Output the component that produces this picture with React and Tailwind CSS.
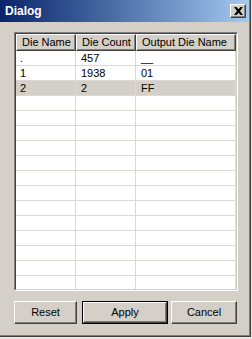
const rows = [
  ['.', '457', '__'],
  ['1', '1938', '01'],
  ['2', '2', 'FF', true],
]

const emptyRows = Array.from({ length: 14 })

function Raised({ className = '', children }) {
  return (
    <div
      className={`flex items-center border-t border-l border-t-white border-l-white border-r border-b border-r-[#404040] border-b-[#404040] shadow-[inset_-1px_-1px_0_#808080] bg-[#d4d0c8] ${className}`}
    >
      {children}
    </div>
  )
}

export default function App() {
  return (
    <div
      className="w-[252px] h-[339px] bg-[#ece9e2] overflow-hidden text-[11px] text-black"
      style={{ fontFamily: '"Liberation Sans", Arial, sans-serif' }}
    >
      <div className="w-[251px] h-[337px] border-r border-b border-[#404040] bg-[#d4d0c8]">
        <div className="w-[250px] h-[336px] border-r border-b border-[#808080] flex flex-col">
          {/* title bar */}
          <div className="h-[22px] w-[249px] flex items-center justify-between bg-gradient-to-r from-[#0a246a] to-[#a6caf0] pl-[5px] pr-[3px]">
            <span className="text-white font-bold text-[12px]">Dialog</span>
            <Raised className="w-[16px] h-[14px] justify-center">
              <svg width="9" height="8" viewBox="0 0 9 8">
                <path d="M0 0h2.5l2 2.3 2-2.3H9L6 4l3 4H6.5l-2-2.3-2 2.3H0l3-4z" fill="#000" />
              </svg>
            </Raised>
          </div>

          <div className="flex flex-col pl-[14px] pt-[10px]">
            {/* list view */}
            <div className="w-[224px] h-[259px] border border-t-[#808080] border-l-[#808080] border-b-white border-r-white">
              <div className="w-full h-full border border-t-[#404040] border-l-[#404040] border-b-[#d4d0c8] border-r-[#d4d0c8] bg-white overflow-hidden">
                <div className="flex h-[17px]">
                  <Raised className="w-[60px] h-full pl-[5px]">Die Name</Raised>
                  <Raised className="w-[60px] h-full pl-[5px]">Die Count</Raised>
                  <Raised className="w-[100px] h-full pl-[5px]">Output Die Name</Raised>
                </div>
                {rows.map(([a, b, c, sel], i) => (
                  <div
                    key={i}
                    className={`flex h-[15px] border-b border-[#dcd9d2] ${sel ? 'bg-[#d4d0c8]' : ''}`}
                  >
                    <div className="w-[60px] pl-[4px] border-r border-[#dcd9d2] leading-[14px]">{a}</div>
                    <div className="w-[60px] pl-[5px] border-r border-[#dcd9d2] leading-[14px]">{b}</div>
                    <div className="w-[100px] pl-[5px] border-r border-[#dcd9d2] leading-[14px]">{c}</div>
                  </div>
                ))}
                {emptyRows.map((_, i) => (
                  <div key={i} className="flex h-[15px] border-b border-[#dcd9d2]">
                    <div className="w-[60px] border-r border-[#dcd9d2]" />
                    <div className="w-[60px] border-r border-[#dcd9d2]" />
                    <div className="w-[100px] border-r border-[#dcd9d2]" />
                  </div>
                ))}
              </div>
            </div>

            {/* buttons */}
            <div className="flex mt-[10px] h-[23px]">
              <Raised className="w-[63px] h-full justify-center">Reset</Raised>
              <div className="ml-[5px] w-[86px] h-full border border-black">
                <Raised className="w-full h-full justify-center">Apply</Raised>
              </div>
              <Raised className="ml-[3px] w-[66px] h-full justify-center">Cancel</Raised>
            </div>
          </div>
        </div>
      </div>
    </div>
  )
}
